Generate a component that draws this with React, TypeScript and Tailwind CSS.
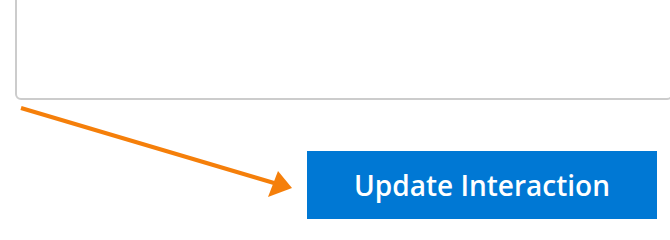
export default function App() {
  return (
    <div className="relative h-[232px] w-[670px] overflow-hidden bg-white font-['Open_Sans',sans-serif]">
      {/* textarea, cut off at the top */}
      <div className="ml-[15px] mt-[-20px] h-[120px] w-[658px] rounded-[6px] border-2 border-[#cccccc] bg-white" />

      <div className="mt-[51px] flex justify-end pr-[13px]">
        <button className="flex h-[68px] w-[350px] items-center justify-center bg-[#0078d4] text-[28px] font-semibold text-white">
          Update Interaction
        </button>
      </div>

      {/* annotation arrow */}
      <svg className="absolute left-0 top-0" width="670" height="232" viewBox="0 0 670 232">
        <line x1="21" y1="108" x2="274" y2="183" stroke="#f57f0a" strokeWidth="4" />
        <polygon points="292,188 278,171 268,197" fill="#f57f0a" />
      </svg>
    </div>
  );
}
